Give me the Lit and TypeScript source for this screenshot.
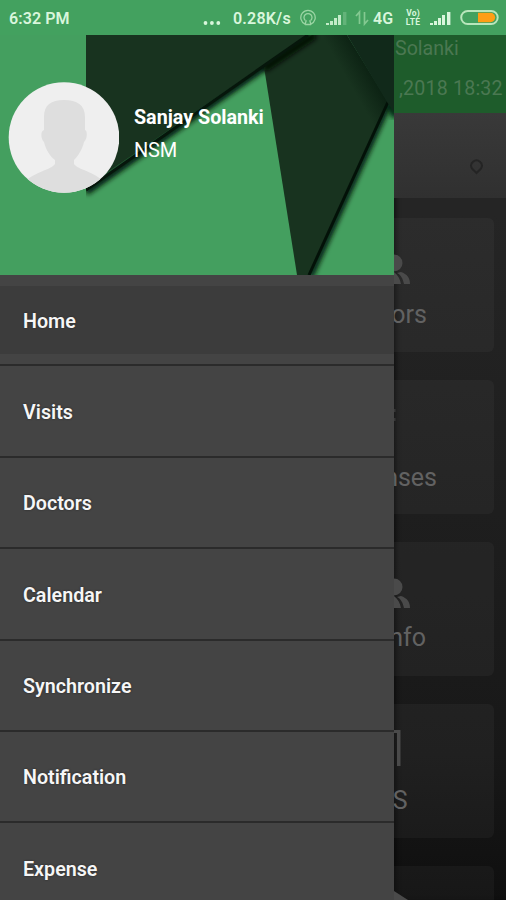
import { LitElement, html, css, svg } from "lit";
import { customElement, property } from "lit/decorators.js";

@customElement("status-bar")
class StatusBar extends LitElement {
  static styles = css`
    :host { display: flex; align-items: center; height: 35px; box-sizing: border-box; padding: 1px 7px 0 9px; background: #43a15f; color: #d9f6dc; font: 500 16px/20px Roboto, sans-serif; }
    .time { letter-spacing: 0.1px; flex: 1; padding-top: 1px; font-weight: 600; }
    .rate { letter-spacing: 0.2px; width: 67px; white-space: nowrap; padding-top: 1px; font-weight: 600; }
    .net { width: 28px; white-space: nowrap; padding-top: 1px; font-weight: 600; }
    .dots { width: 30px; height: 20px; margin-top: 2px; }
    .volte { display: flex; flex-direction: column; align-items: center; width: 18px; margin: 0 8px 0 3px; font: 700 8.5px/9px Roboto, sans-serif; letter-spacing: 0.2px; }
    svg { display: block; flex: none; }
  `;
  bars(last: string) {
    return svg`<rect x="0" y="14" width="3" height="2"/><rect x="4" y="12" width="3" height="4"/><rect x="8" y="9" width="3" height="7"/><rect x="12" y="6" width="3" height="10"/><rect x="17" y="3" width="3.4" height="13" opacity=${last}/>`;
  }
  render() {
    return html`
      <span class="time">6:32 PM</span>
      <svg class="dots" viewBox="0 0 30 20" fill="#d9f6dc"><circle cx="2.5" cy="14" r="1.9"/><circle cx="8.9" cy="14" r="1.9"/><circle cx="15.300" cy="14" r="1.9"/></svg>
      <span class="rate">0.28K/s</span>
      <svg width="26" height="20" viewBox="0 0 26 20" fill="none" stroke="#9bd5a4" stroke-width="1.300"><path d="M5.200 16.200a7.200 7.200 0 1 1 5.600 0M5.400 12.600a4 4 0 1 1 5.200 0"/><path d="M6.300 12.200 5 16.500M9.700 12.200l1.300 4.300M5 16.500h6"/></svg>
      <svg width="28" height="20" viewBox="0 -1 28 20" fill="#c4ecc9">${this.bars(".25")}</svg>
      <svg width="19" height="20" viewBox="0 0 19 20" fill="none" stroke="#84c991" stroke-width="1.700"><path d="M5.500 16V4L2 8M10.500 4v12l3.500-4"/></svg>
      <span class="net">4G</span>
      <span class="volte"><span>Vo)</span><span>LTE</span></span>
      <svg width="30" height="20" viewBox="0 -1 30 20" fill="#d9f6dc">${this.bars("1")}</svg>
      <svg width="39" height="20" viewBox="0 0 39 20"><rect x="1.200" y="3" width="36.500" height="13" rx="6.500" fill="#43a15f" stroke="#b9e6bc" stroke-width="2"/><path d="M18 4.800h12.500a4.700 4.700 0 0 1 0 9.400H18z" fill="#ff9e16"/></svg>
    `;
  }
}

@customElement("drawer-header")
class DrawerHeader extends LitElement {
  static styles = css`
    :host { display: flex; align-items: flex-start; position: relative; height: 240px; padding: 47px 0 0 8px; box-sizing: border-box; background: #449f5f; overflow: hidden; color: #fff; font-family: Roboto, sans-serif; }
    .art { position: absolute; left: 0; top: 0; }
    .avatar { position: relative; flex: none; }
    .who { position: relative; padding: 24px 0 0 15px; }
    .name { font-weight: 700; font-size: 19.7px; line-height: 24px; }
    .role { font-size: 20px; line-height: 24px; margin-top: 8px; letter-spacing: -0.2px; }
  `;
  render() {
    return html`
      <svg class="art" width="394" height="240" viewBox="0 0 394 240">
        <defs>
          <filter id="soft" x="-20%" y="-20%" width="140%" height="140%"><feGaussianBlur stdDeviation="2.5"/></filter>
          <linearGradient id="fold" gradientUnits="userSpaceOnUse" x1="368" y1="32" x2="347" y2="44"><stop offset="0" stop-color="#0c2213"/><stop offset="1" stop-color="#18331f"/></linearGradient>
          <clipPath id="right"><path d="M86 0H394V240H86z"/></clipPath>
        </defs>
        <g clip-path="url(#right)">
          <path d="M389 68 310 242" stroke="#03190a" stroke-width="6" filter="url(#soft)"/>
          <path d="M388 68 396 82" stroke="#06240f" stroke-width="7" filter="url(#soft)"/>
          <path d="M310 0 86 157" stroke="#03190a" stroke-width="7" filter="url(#soft)"/>
          <path d="M264 32 312 0H347L388 67 309 240H297z" fill="url(#fold)"/>
          <path d="M388 67 309 240" stroke="#031108" stroke-width="3"/>
          <path d="M347 0H394V77L387 67z" fill="#11291a"/>
          <path d="M315 0 264 34" stroke="#020c05" stroke-width="7" filter="url(#soft)"/>
          <path d="M86 0H307L86 152z" fill="#18331f"/>
          <path d="M308 0 86 155" stroke="#06160b" stroke-width="3"/>
        </g>
      </svg>
      <svg class="avatar" width="111" height="112" viewBox="0 0 111 112">
        <defs><clipPath id="disc"><circle cx="56" cy="55.5" r="55.3"/></clipPath></defs>
        <g clip-path="url(#disc)">
          <rect width="112" height="112" fill="#efefef"/>
          <path d="M36 35C36 23 43 18 56 18S77 23 77 35V48C80 49 79 58 76 60C74 68 70 74 66 78V82C70 88 86 89 97 101L85 112H27L15 101C28 89 43 88 47 82V78C42 74 38 68 36 60C33 58 32 49 36 48z" fill="#dedede"/>
        </g>
      </svg>
      <div class="who"><div class="name">Sanjay Solanki</div><div class="role">NSM</div></div>
    `;
  }
}

@customElement("nav-menu")
class NavMenu extends LitElement {
  static styles = css`
    :host { display: block; color: #f6f6f6; font: 600 19.7px/24px Roboto, sans-serif; }
    .row { height: 91.4px; box-sizing: border-box; border-bottom: 2px solid #2b2b2b; padding: 11px 0 10.4px; }
    .label { display: flex; align-items: center; height: 68px; box-sizing: border-box; padding: 3px 0 0 23px; text-shadow: 0 0 2px #222; }
    .active { background: #3c3c3c; }
  `;
  items = ["Home", "Visits", "Doctors", "Calendar", "Synchronize", "Notification", "Expense"];
  render() {
    return this.items.map((t, i) => html`<div class="row"><div class="label ${i === 0 ? "active" : ""}">${t}</div></div>`);
  }
}

@customElement("dash-card")
class DashCard extends LitElement {
  @property() label = "";
  @property() icon = "";
  static styles = css`
    :host { display: flex; flex-direction: column; flex: none; height: 134px; margin-right: 12px; border-radius: 0 6px 6px 0; background: rgba(255, 255, 255, 0.035); overflow: hidden; }
    svg { display: block; flex: none; }
    .label { display: flex; justify-content: flex-end; color: #626262; font: 400 25px/30px Roboto, sans-serif; }
    .doctors { width: 33px; margin-top: 5px; }
    .expenses { width: 43px; margin-top: 6px; }
    .info { width: 32px; margin-top: 4px; }
    .reports { width: 13.5px; margin-top: 5px; }
  `;
  glyph() {
    if (this.icon === "doctors" || this.icon === "info")
      return svg`<path d="M0 36.500a8.500 8.500 0 0 1 8.500 8.500 8.500 8.500 0 0 1-8.500 8.500z"/><path d="M0 54c4 3 6 7 7 12H0zM7 54C13 56 16 60 16 66H10C9 61 7 57 3 55z"/>`;
    if (this.icon === "expenses") return svg`<path d="M0 29h1.500v3H0zM0 38h1.500v3H0z" opacity=".6"/>`;
    if (this.icon === "reports") return svg`<path d="M0 26h6.500v36H3V29H0z"/>`;
    return svg`<path d="M0 25 14 34 0 40z"/>`;
  }
  render() {
    return html`<svg width="100" height="77" viewBox="0 0 100 77" fill="#4a4a4a">${this.glyph()}</svg>
      ${this.label ? html`<div class="label ${this.icon}">${this.label}</div>` : ""}`;
  }
}

@customElement("app-root")
class AppRoot extends LitElement {
  static styles = css`
    :host { display: flex; flex-direction: column; width: 506px; height: 900px; overflow: hidden; background: #1d1d1d; font-family: Roboto, sans-serif; }
    status-bar { flex: none; }
    .body { display: grid; grid-template-columns: 394px 112px; height: 865px; }
    .drawer { height: 865px; overflow: hidden; background: #444; }
    .page { display: flex; flex-direction: column; height: 865px; overflow: hidden; background: linear-gradient(#252525 180px, #1d1d1d 520px, #181818 720px, #0f0f0f); box-shadow: inset 4px 0 5px -2px rgba(0, 0, 0, 0.55); }
    .top { flex: none; height: 78px; box-sizing: border-box; padding: 1px 0 0 1px; background: #1e5c2b; color: #4b7852; font-size: 19.6px; line-height: 26px; white-space: nowrap; }
    .date { padding: 14px 0 0 4px; letter-spacing: 0.2px; }
    .map { flex: none; display: flex; height: 85px; background: linear-gradient(#393939, #303030); }
    .map svg { margin: 46px 0 0 75px; }
    .cards { display: flex; flex-direction: column; gap: 28px; padding-top: 20px; }
  `;
  render() {
    return html`
      <status-bar></status-bar>
      <div class="body">
        <div class="drawer"><drawer-header></drawer-header><nav-menu></nav-menu></div>
        <div class="page">
          <div class="top"><div>Solanki</div><div class="date">,2018 18:32</div></div>
          <div class="map"><svg width="15" height="17" viewBox="0 0 15 17" fill="none" stroke="#242424" stroke-width="2"><path d="M7.500 14 3 9.500A5.300 5.300 0 1 1 12 9.500z"/></svg></div>
          <div class="cards">
            <dash-card icon="doctors" label="ors"></dash-card>
            <dash-card icon="expenses" label="nses"></dash-card>
            <dash-card icon="info" label="nfo"></dash-card>
            <dash-card icon="reports" label="S"></dash-card>
            <dash-card icon="more"></dash-card>
          </div>
        </div>
      </div>
    `;
  }
}
